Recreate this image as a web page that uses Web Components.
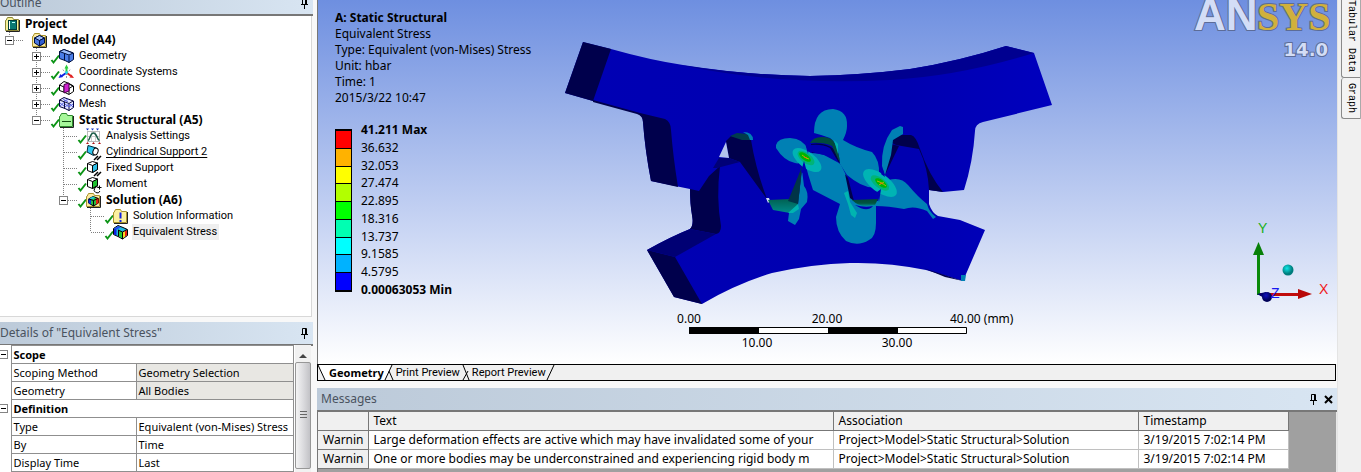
<!DOCTYPE html>
<html lang="en">
<head>
<meta charset="utf-8">
<title>Static Structural - Mechanical</title>
<style>
html, body { margin: 0; height: 100%; overflow: hidden; background: #f0f0f0; }
body { font: 12px/16px "Noto Sans", "Open Sans", sans-serif; color: #000; }
</style>
</head>
<body>
<mech-app></mech-app>
<script>
const define = (name, html, ready) => {
  const tpl = document.createElement('template');
  tpl.innerHTML = html;
  customElements.define(name, class extends HTMLElement {
    connectedCallback() {
      if (this.shadowRoot) return;
      this.attachShadow({ mode: 'open' }).append(tpl.content.cloneNode(true));
      if (ready) ready(this, this.shadowRoot);
    }
  });
};

const folder = (fill, edge) => `<path d="M6 4.500 L7.500 1.500 H12.500 L13.500 3.500 H18.500 V14.500 H5.500 V4.500Z" fill="${fill}" stroke="${edge}"/><path d="M6 15.500H19.500V4" fill="none" stroke="#222"/>`;
const smallCube = (a, b, c) => `<path d="M7.500 6 L12.500 3.500 L17.500 6 V11 L12.500 14 L7.500 11Z" fill="${a}" stroke="#001040"/><path d="M7.500 6 L12.500 8.500 L17.500 6 L12.500 3.500Z" fill="${b}" stroke="#001040"/><path d="M12.500 8.500 L17.500 6 V11 L12.500 14Z" fill="${c}" stroke="#001040"/>`;
const hatch = '<path d="M13 16l4-4M16 16l4-4" stroke="#000" stroke-width="1.500"/>';
const wireBox = (front, f2) => `<path d="M6.500 3.500 L11.500 1.500 L16.500 3 V9.500 L11.500 12.500 L6.500 10.500Z" fill="#fff" stroke="#000"/><path d="M11.500 5.500 L16.500 3 V9.500 L11.500 12.500Z" fill="${front}" stroke="#000"/><path d="M6.500 3.500 L11.500 5.500 L16.500 3" fill="${f2}" stroke="#000"/>`;
const ICONS = {
  project: folder('#f6f19a', '#8c8636') + '<rect x="8.500" y="4.500" width="8" height="9" fill="#0a7a72" stroke="#003c3c"/><path d="M9.500 5v8" stroke="#fff"/><path d="M12 6.500h3" stroke="#bff"/>',
  model: folder('#fbe9a0', '#a8922c') + smallCube('#4b78e0', '#9dbcf8', '#2f5cd0'),
  geometry: '<path d="M5.500 3.500 L10 1.500 L14 3 L19.500 5 V11.500 L15 14.500 L11 12.500 L5.500 10.500Z" fill="#4a7de8" stroke="#001040"/><path d="M5.500 3.500 L10 1.500 L19 5 L15 7 Z" fill="#9dc0ff" stroke="#001040"/><path d="M10.500 5.500V12.500M15 7.500V14.500" stroke="#001040"/>',
  coords: '<path d="M12.500 8.500V3" stroke="#2ecc40" stroke-width="2"/><path d="M12.500 0.500l2 4h-4z" fill="#2ecc40"/><path d="M12 9L7 12.500" stroke="#1020e0" stroke-width="2"/><path d="M4.500 14l2-4 2.500 3z" fill="#1020e0"/><path d="M13 9L17 12" stroke="#e02020" stroke-width="2"/><path d="M20 14l-4.500-.5 2-3z" fill="#e02020"/><path d="M12.500 9L8 5M12.500 9L17 5M12.500 9V15" stroke="#999" stroke-dasharray="2 1"/><circle cx="12.500" cy="8.500" r="1.500" fill="#20d8e8"/>',
  connections: '<path d="M5.500 5 L10 1.500 L14 3 L19.500 6 V11.500 L15 14.500 L11 12.500 L5.500 10.500Z" fill="#fff" stroke="#000"/><path d="M5.500 5 L10 7 L14 3.500 L19 6 L15 8.500V14M10 7V12" stroke="#000" fill="none"/><path d="M10 4.500 L15 3 V11 L10 13Z" fill="#d020d0" stroke="#400040"/>',
  mesh: '<path d="M5.500 4 L10 1.500 L14 3 L19.500 5 V11.500 L15 14.500 L11 12.500 L5.500 10.500Z" fill="#e4e8ff" stroke="#000040"/><path d="M5.500 4L15 7.500L19 5M10.500 5.500V12.500M15 7.500V14.500" fill="none" stroke="#101040"/><path d="M6 7L10 10M6 10L10 6.500M11 8L15 11M11 11L15 8M15 11L19 8M16 8L19 11M9 3L14 6M14 3.500L10 5" stroke="#5560e0"/>',
  folderGreen: folder('#a6f79a', '#2c8a2c') + '<path d="M8 9.500h9" stroke="#145014"/>',
  settings: '<rect x="6.500" y="3.500" width="12" height="10" fill="#fff" stroke="#bbb"/><path d="M10.500 4v9M14.500 4v9M7 8.500h11" stroke="#ccc"/><path d="M7 12.500C9 12 9 5 12.500 5S16 12 18.500 12.500" fill="none" stroke="#1c5c48" stroke-width="1.500"/><path d="M5 .5h3l-1.500 2zM10 .5h3l-1.500 2zM15 .5h3l-1.500 2z" fill="#1838c8"/><path d="M5 16h3l-1.500-2zM11 16h3l-1.500-2zM17 16h3l-1.500-2z" fill="#b01818"/>',
  cylinder: '<path d="M7 1.500L15.500 4 16.500 8.500 12.500 11.500 6 8Z" fill="#30c8f0" stroke="#002838"/><ellipse cx="14.500" cy="7.500" rx="2.500" ry="3.500" transform="rotate(20 14.500 7.500)" fill="#fff" stroke="#000"/>' + hatch,
  fixed: wireBox('#30c0e8', '#fff') + hatch,
  moment: wireBox('#20c030', '#fff') + '<path d="M18 11.500A3 3 0 1 0 19 15" fill="#fff" stroke="#000"/><path d="M16.500 11.500h4M18.500 9.500v4" stroke="#000"/>',
  solution: folder('#fbe9a0', '#a8922c') + '<path d="M7.500 7L12 4.500 17.500 6.500V11L12.500 14 7.500 11Z" fill="#28c040" stroke="#000"/><path d="M7.500 7L10 6V12.500L7.500 11Z" fill="#1030e0"/><path d="M8 6.500L12 4.500 14 5.500 11 7.500Z" fill="#20c8d8"/><path d="M15 6L17.500 6.500V11L15 12.500Z" fill="#e82010"/><path d="M12.500 8.500V14M12.500 8.500L17 6.500M12.500 8.500L8 7" stroke="#000"/>',
  info: folder('#fbf0a0', '#a8922c') + '<path d="M12.500 4.500v6M12.500 12v2" stroke="#1020e0" stroke-width="2"/>',
  stress: '<path d="M5.500 4.500L10 1.500L15 3.500L19.500 5.500V11.500L14.500 15L10 12.500L5.500 10.500Z" fill="#20b8e0" stroke="#000"/><path d="M6 4.500L8.500 5.500V11.500L6 10.500Z" fill="#1020e0"/><path d="M6 4.500L10 2 13 3 9 5.500Z" fill="#2050f0"/><path d="M11 6.500L14 7.500V14L11 12.500Z" fill="#20c830"/><path d="M15 8L17 7V13L15 14Z" fill="#f8d820"/><path d="M17 7L19 6V11.500L17 12.500Z" fill="#e82010"/><path d="M10.500 6V12.500M14.500 8V15M14.500 8L19 5.500M14.500 8L10 6" stroke="#000"/>'
};
const CHECK = '<path d="M-2.500 12L-0.500 14.500L5 7.500" fill="none" stroke="#0c9416" stroke-width="2"/>';
const PIN = '<svg width="9" height="11" viewBox="0 0 9 11" aria-hidden="true"><path d="M2.500 0.500H6.500V6.500M2.500 0.500V6.500M1 6.500H8M5.500 1V6M4.500 7V11" fill="none" stroke="#000"/></svg>';

define('tree-item', `<style>
:host { display: flex; height: 16px; align-items: stretch; font: 11px/16px Roboto, "Liberation Sans", sans-serif; white-space: nowrap; }
svg { display: block; overflow: visible; flex: none; }
.cell { position: relative; width: 27px; flex: none; }
button { position: absolute; left: 5px; top: 4px; width: 9px; height: 9px; padding: 0; border: 1px solid #848484; border-radius: 0; background: #fff; }
button svg { width: 7px; height: 7px; }
a { display: block; color: #000; text-decoration: none; padding: 0 1px; line-height: 16px; }
:host([bold]) a { font: 700 12px/16px "Noto Sans", sans-serif; }
:host([underline]) a { text-decoration: underline; text-underline-offset: 2px; }
:host([selected]) a { background: #efefef; padding-right: 2px; }
</style><a href="#"><slot></slot></a>`, (el, root) => {
  const label = root.querySelector('a');
  const guides = el.getAttribute('guides') || '';
  [...guides].forEach(g => {
    const cell = document.createElement('span');
    cell.className = 'cell';
    const down = g === '|' || g === 't' ? 'M9.500 0V16' : g === 'l' ? 'M9.500 0V8' : '';
    const across = g === 't' || g === 'l' ? 'M10 8.500H24' : '';
    cell.innerHTML = `<svg width="27" height="16" aria-hidden="true"><path d="${down}${across}" fill="none" stroke="#808080" stroke-dasharray="1 1"/></svg>`;
    label.before(cell);
  });
  const box = el.getAttribute('box');
  if (box) {
    const b = document.createElement('button');
    b.setAttribute('aria-label', box === '+' ? 'Expand' : 'Collapse');
    b.innerHTML = `<svg viewBox="0 0 7 7"><path d="M1 3.500H6${box === '+' ? 'M3.500 1V6' : ''}" stroke="#000"/></svg>`;
    root.querySelectorAll('.cell')[guides.length - 1].append(b);
  }
  const icon = document.createElement('span');
  icon.innerHTML = `<svg width="24" height="16" viewBox="0 0 24 16" aria-hidden="true">${el.hasAttribute('ok') ? CHECK : ''}${ICONS[el.getAttribute('icon')]}</svg>`;
  label.before(icon);
});

define('outline-tree', `<style>
:host { display: block; height: 300px; background: #fff; border-right: 1px solid #d8d8d8; border-bottom: 1px solid #d8d8d8; margin-right: 1px; }
</style>
<tree-item icon="project" bold>Project</tree-item>
<tree-item icon="model" guides="l" box="-" bold>Model (A4)</tree-item>
<tree-item icon="geometry" guides=" t" box="+" ok>Geometry</tree-item>
<tree-item icon="coords" guides=" t" box="+" ok>Coordinate Systems</tree-item>
<tree-item icon="connections" guides=" t" box="+" ok>Connections</tree-item>
<tree-item icon="mesh" guides=" t" box="+" ok>Mesh</tree-item>
<tree-item icon="folderGreen" guides=" l" box="-" ok bold>Static Structural (A5)</tree-item>
<tree-item icon="settings" guides="  t" ok>Analysis Settings</tree-item>
<tree-item icon="cylinder" guides="  t" ok underline>Cylindrical Support 2</tree-item>
<tree-item icon="fixed" guides="  t" ok>Fixed Support</tree-item>
<tree-item icon="moment" guides="  t" ok>Moment</tree-item>
<tree-item icon="solution" guides="  l" box="-" ok bold>Solution (A6)</tree-item>
<tree-item icon="info" guides="   t" ok>Solution Information</tree-item>
<tree-item icon="stress" guides="   l" ok selected>Equivalent Stress</tree-item>`);

define('dock-panel', `<style>
:host { display: block; }
header { display: flex; align-items: center; gap: 6px; height: 22px; padding-right: 4px; background: linear-gradient(90deg, #bccad9, #d8e5f2); border-bottom: 2px solid #777; color: #4a5360; }
h2 { flex: 1; margin: 0; font-size: 12px; font-weight: 400; line-height: 22px; padding-left: var(--title-pad, 0px); }
button { display: flex; padding: 0; border: 0; background: none; }
button.close { display: none; }
:host([closable]) .close { display: flex; }
</style>
<header><h2></h2><button aria-label="Pin">${PIN}</button><button class="close" aria-label="Close"><svg width="9" height="9" viewBox="0 0 9 9"><path d="M1 1L8 8M8 1L1 8" stroke="#000" stroke-width="2"/></svg></button></header>
<slot></slot>`, (el, root) => { root.querySelector('h2').textContent = el.getAttribute('heading'); });

define('details-grid', `<style>
:host { display: flex; background: #fff; margin: -1px 2px 0 0; }
table { flex: 1; min-width: 0; table-layout: fixed; border-collapse: collapse; font-size: 11px; line-height: 17px; }
col.gutter { width: 11px; } col.name { width: 125px; }
th, td { height: 17px; padding: 0 0 0 2px; text-align: left; font-weight: 400; white-space: nowrap; overflow: hidden; border: 1px solid #8f8f8f; }
.gutter { border-left: 0; border-top: 0; border-bottom: 0; padding: 0; background: #fff; }
.group { font-weight: 700; }
.off { background: #e8e7e3; }
.gutter button { display: block; width: 8px; height: 9px; padding: 0; border: 1px solid #848484; border-left: 0; background: #fff; }
.gutter svg { display: block; }
.scroll { flex: none; width: 16px; margin-left: 1px; display: flex; flex-direction: column; background: #f1f1f1; }
.scroll button { height: 17px; padding: 0; border: 0; background: none; }
.thumb { display: flex; align-items: center; justify-content: center; height: 105px; border: 1px solid #979797; border-radius: 2px; background: linear-gradient(90deg, #f4f4f4, #dcdcdf 50%, #c2c2c6); }
</style>
<table><colgroup><col class="gutter"><col class="name"><col></colgroup><tbody></tbody></table>
<div class="scroll"><button aria-label="Scroll up"><svg width="8" height="4" viewBox="0 0 8 4"><path d="M0 4L4 0L8 4Z" fill="#444"/></svg></button><div class="thumb"><svg width="7" height="9" viewBox="0 0 7 9"><path d="M0 .5H7M0 3.500H7M0 6.500H7" stroke="#666"/></svg></div></div>`, (el, root) => {
  const rows = [['Scope'], ['Scoping Method', 'Geometry Selection', 'off'], ['Geometry', 'All Bodies', 'off'], ['Definition'], ['Type', 'Equivalent (von-Mises) Stress', ''], ['By', 'Time', ''], ['Display Time', 'Last', '']];
  root.querySelector('tbody').innerHTML = rows.map(r => r.length === 1
    ? `<tr><td class="gutter"><button aria-label="Collapse ${r[0]}"><svg width="7" height="7" viewBox="0 0 7 7"><path d="M1 3.500H6" stroke="#000"/></svg></button></td><th class="group" colspan="2">${r[0]}</th></tr>`
    : `<tr><td class="gutter"></td><th scope="row">${r[0]}</th><td class="${r[2]}">${r[1]}</td></tr>`).join('');
});

define('color-legend', `<style>
:host { display: flex; gap: 9px; }
.bar { display: flex; flex-direction: column; width: 15px; height: 159px; margin-top: 7px; border: 1px solid #000; border-width: 2px 1px; align-self: flex-start; }
.bar i { flex: 1; border-top: 1px solid #000; }
.bar i:first-child { border-top: 0; }
ol { list-style: none; margin: 0; padding: 0; display: flex; flex-direction: column; justify-content: space-between; height: 176px; }
li { line-height: 16px; }
li:first-child, li:last-child { font-weight: 700; }
</style><div class="bar"></div><ol></ol>`, (el, root) => {
  root.querySelector('.bar').innerHTML = ['#f00', '#ffb200', '#ff0', '#b2ff00', '#0f0', '#00ffb2', '#0ff', '#00b2ff', '#00f'].map(c => `<i style="background:${c}"></i>`).join('');
  root.querySelector('ol').innerHTML = ['41.211 Max', '36.632', '32.053', '27.474', '22.895', '18.316', '13.737', '9.1585', '4.5795', '0.00063053 Min'].map(t => `<li>${t}</li>`).join('');
});

define('gear-scene', `<style>
:host { display: block; }
svg { display: block; width: 100%; height: 100%; }
text { font: 12px "Noto Sans", "Open Sans", sans-serif; }
</style>
<svg viewBox="318 0 1019 364" role="img" aria-label="Equivalent stress on gear teeth">
<defs>
<linearGradient id="face" x1="0" y1="0" x2="1" y2="0"><stop offset="0" stop-color="#0000b4"/><stop offset=".7" stop-color="#0000b0"/><stop offset="1" stop-color="#0000be"/></linearGradient>
<linearGradient id="root" x1="0" y1="0" x2="0" y2="1"><stop offset="0" stop-color="#004836"/><stop offset=".6" stop-color="#005440"/><stop offset="1" stop-color="#008a8a"/></linearGradient>
</defs>
<path fill="url(#face)" d="M583 42L611 49Q650 60 683 65Q745 75 810 76Q862 75 910 69Q960 61 1006 46L1034 53L1052 105L983 122Q975 124 975 131Q973 162 964 190L943 192L929 190L929 204Q932 213 938 216L960 220L985 230L963 281L926 270Q888 262 850 263Q812 264 772 273Q736 284 702 304L674 297L647 250Q670 237 690 229Q694 225 692 215Q690 204 690 189L651 181Q645 150 643 122Q643 116 637 113L593 101L565 93Z"/>
<path fill="#000090" d="M680 65Q745 75 810 76Q862 75 910 69Q960 61 1006 46L1034 53Q960 76 890 80Q780 86 680 65Z"/>
<g fill="#00004c">
<path d="M583 42L611 49L593 101L565 93Z"/>
<path d="M593 100L640 113L665 119Q671 122 671 130Q673 156 678 187L651 181Q645 150 643 122Q643 116 637 114L593 102Z"/>
<path d="M690 189L699 191L709 176L720 166Q716 198 721 226Q721 233 716 234L690 229Q694 225 692 215Q690 204 690 189Z"/>
<path d="M647 250L675 257L702 304L674 297Z"/>
<path d="M726 141L731 136L751 140Q756 170 767 199L740 162L729 158Z"/>
<path d="M893 139L899 135H911Q916 136 920 149Q929 175 943 192L929 190Q928 168 919 149L896 145L892 143Z"/>
<path d="M899 146L885 175L891 144Z"/>
<path d="M923 268L963 281L945 277Z"/>
</g>
<path fill="#000076" d="M719 158L729 158L740 162L717 168L713 168Z"/>
<path fill="#000074" d="M647 250Q670 237 690 229L716 234L675 257Z"/>
<path fill="#b4c4ed" d="M726 142L729 158L719 157Z"/><path fill="#d0dbf5" d="M766 198H769L770 201L768 203Z"/>
<path fill="#003c4c" d="M730 136L737 133L748 134L751 140L742 140Z"/>
<g fill="#0080b4">
<path d="M743 132Q753 132 753 140H750L748 135Z"/>
<path d="M776 145Q778 138 790 138Q804 139 807 149L805 157Q801 165 795 163Q784 161 776 148Z"/>
<path d="M802 170L804 186Q809 192 807 202L801 209L799 219L795 225L788 221L789 213L798 204Z"/>
<path d="M814 133Q814 109 833 109Q848 111 847 126Q847 132 843 140Q856 148 872 152Q880 160 879 175L881 186Q867 192 847 175L840 164Q838 144 830 138Q822 135 814 133Z"/>
<path d="M804 158L809 153Q830 153 841 165L847 177L853 200L878 201L881 188L881 183Q899 174 908 185Q918 197 927 204Q929 212 936 217L933 219L927 211Q914 205 904 209Q888 206 876 206L876 223Q876 237 869 240Q858 247 846 241Q836 232 836 217L840 204L813 190L808 174Z"/>
<path d="M900 126L903 127L903 134L893 140L891 155L885 175L882 166Q881 145 892 130Z"/>
<path d="M961 275H966L965 281H961Z"/>
</g>
<path fill="#00004c" d="M845 174L848 178L854 201L850 198ZM811 144Q824 142 834 149L840 163L824 153L812 153Z"/>
<path fill="#0000ae" d="M811 145Q822 144 830 148L839 163L824 155L811 152Z"/>
<path fill="url(#root)" d="M768 200L790 199L802 167L798 204Q795 212 790 213L773 210Z"/>
<path fill="#003448" d="M802 167L788 201L798 204Z"/>
<path fill="#004a3c" d="M810 143Q813 137 822 137Q831 137 834 142Q839 152 840 163L832 146Q823 142 810 143Z"/>
<path fill="url(#root)" d="M852 200L878 199L875 205L866 206Q858 206 852 200Z"/>
<path d="M855 205Q865 208 873 206Q867 213 855 205Z" fill="#0000b0"/>
<path fill="#00b4b0" d="M844 193L848 191L850 202L857 213L855 218L851 215L848 204ZM798 204L799 209L793 213L788 213ZM834 140L838 144L838 154Z"/>
<g fill="#00b4b4"><ellipse cx="807" cy="160" rx="17" ry="8" transform="rotate(37 807 160)"/><ellipse cx="880" cy="183" rx="20" ry="9" transform="rotate(37 880 183)"/></g>
<g fill="#00b478"><ellipse cx="806" cy="158" rx="10" ry="5" transform="rotate(37 806 158)"/><ellipse cx="880" cy="183" rx="11" ry="5" transform="rotate(37 880 183)"/></g>
<g fill="#00b400"><ellipse cx="805" cy="157" rx="7" ry="3" transform="rotate(37 805 157)"/><ellipse cx="881" cy="183" rx="7" ry="3" transform="rotate(37 881 183)"/></g>
<path d="M802 155L806 158L809 159M877 181L882 183L886 186M884 182L879 185" fill="none" stroke="#b4b400" stroke-width="1"/><path d="M804 157L807 158M880 183L883 184" stroke="#e07010"/>
<path fill="#0000b0" d="M806 146L809 147L808 154ZM804 161L801 172L808 176ZM883 170L885 177L881 174ZM877 192L881 189L879 202Z"/>
<g stroke="#000"><path d="M689.500 327.500H966.500V333.500H689.500Z" fill="#fff"/><path d="M689.500 327.500H758.500V333.500H689.500ZM828.500 327.500H897.500V333.500H828.500Z" fill="#000"/></g>
<g text-anchor="middle"><text x="689" y="323">0.00</text><text x="827" y="323">20.00</text><text x="757" y="347">10.00</text><text x="897" y="347">30.00</text></g><text x="950" y="323">40.00 (mm)</text>
</svg>`);

define('axis-triad', `<style>:host { display: block; } svg { display: block; } text { font: 14px "Liberation Sans", sans-serif; }</style>
<svg width="84" height="86" viewBox="1250 220 84 86" role="img" aria-label="Axis triad">
<defs><radialGradient id="c" cx=".4" cy=".35"><stop offset="0" stop-color="#10e8e8"/><stop offset="1" stop-color="#007c7c"/></radialGradient><radialGradient id="b" cx=".4" cy=".35"><stop offset="0" stop-color="#1010c0"/><stop offset="1" stop-color="#000058"/></radialGradient></defs>
<path d="M1257 253H1260V295H1257Z" fill="#0a8a0a"/><path d="M1258.500 242L1264 255H1253Z" fill="#088008"/>
<path d="M1260 293H1299V296H1260Z" fill="#c00c0c"/><path d="M1298 289L1312 294L1298 299Z" fill="#b80808"/>
<path d="M1257 294L1266 292V299Z" fill="#000070"/><circle cx="1267" cy="297" r="5" fill="url(#b)"/><circle cx="1288" cy="270" r="5.500" fill="url(#c)"/>
<text x="1258" y="233" fill="#18b018">Y</text><text x="1319" y="294" fill="#f01818">X</text><text x="1271" y="298" fill="#1818f0">Z</text>
</svg>`);

define('ansys-logo', `<style>:host { display: block; } svg { display: block; } text { paint-order: stroke; stroke: #5c6c98; stroke-width: 2px; }
.a { font: 700 44px "Liberation Sans", sans-serif; fill: #d3ddf6; } .s { font: 700 40px "Liberation Serif", serif; fill: #d0b03c; } .v { font: 700 18px "DejaVu Sans", sans-serif; fill: #d3ddf6; }</style>
<svg width="142" height="60" viewBox="1192 0 142 60" role="img" aria-label="ANSYS 14.0"><text class="a" x="1195" y="30">AN</text><text class="s" x="1258" y="30">SYS</text><text class="v" x="1329" y="56" text-anchor="end">14.0</text></svg>`);

define('result-view', `<style>
:host { display: block; position: relative; height: 364px; background: linear-gradient(#6e8fe0, #fff); border-left: 1px solid #777; overflow: hidden; box-sizing: border-box; }
gear-scene { position: absolute; inset: 0; }
ansys-logo { position: absolute; right: 4px; top: 0; }
axis-triad { position: absolute; right: 3px; top: 220px; }
.info { position: relative; padding: 10px 0 0 17px; }
h1, p { margin: 0; font-size: 12px; line-height: 16px; }
color-legend { position: relative; padding: 16px 0 0 17px; }
</style>
<gear-scene></gear-scene><ansys-logo></ansys-logo><axis-triad></axis-triad>
<div class="info"><h1>A: Static Structural</h1><p>Equivalent Stress</p><p>Type: Equivalent (von-Mises) Stress</p><p>Unit: hbar</p><p>Time: 1</p><p>2015/3/22 10:47</p></div>
<color-legend></color-legend>`);

define('view-tabs', `<style>
:host { display: flex; height: 15px; border: 1px solid #000; background: #f0f0f0; margin-right: 1px; font: 11px/15px Roboto, sans-serif; }
button { display: flex; align-items: center; padding: 0; border: 0; background: none; font: inherit; line-height: 15px; color: #000; }
button.on { font: 700 11px/15px "Noto Sans", sans-serif; background: #fff; }
svg { display: block; flex: none; }
</style>
<button class="on"><svg width="11" height="15" viewBox="0 0 11 15"><path d="M0 0L7 15H0Z" fill="#f0f0f0"/><path d="M0 0L7 15" stroke="#000"/></svg>Geometry</button>
<button><svg width="12" height="15" viewBox="0 0 12 15"><path d="M0 0H8L0 15Z" fill="#fff"/><path d="M8 0L1 15M5 6L9 15" fill="none" stroke="#000"/></svg>Print Preview</button>
<button><svg width="12" height="15" viewBox="0 0 12 15"><path d="M8 6L3 15M3 0L9 15" fill="none" stroke="#000"/></svg>Report Preview<svg width="9" height="15" viewBox="0 0 9 15"><path d="M8 0L1 15" stroke="#000"/></svg></button>`);

define('message-list', `<style>
:host { display: block; flex: 1; background: #a0a0a0; border-left: 1px solid #777; border-right: 1px solid #e8e8e8; }
table { table-layout: fixed; width: 971px; border-collapse: collapse; font-size: 12px; line-height: 18px; }
th, td { height: 18px; padding: 0 0 0 5px; text-align: left; font-weight: 400; white-space: nowrap; overflow: hidden; border-right: 1px solid #c0c0c0; border-bottom: 1px solid #c0c0c0; background: #fff; }
thead th { background: #f0f0f0; border-color: #777; }
tbody th { background: #f0f0f0; border-color: #777; }
</style>
<table><colgroup><col style="width:50px"><col style="width:465px"><col style="width:305px"><col></colgroup>
<thead><tr><th></th><th>Text</th><th>Association</th><th>Timestamp</th></tr></thead>
<tbody><tr><th>Warnin</th><td>Large deformation effects are active which may have invalidated some of your</td><td>Project&gt;Model&gt;Static Structural&gt;Solution</td><td>3/19/2015 7:02:14 PM</td></tr>
<tr><th>Warnin</th><td>One or more bodies may be underconstrained and experiencing rigid body m</td><td>Project&gt;Model&gt;Static Structural&gt;Solution</td><td>3/19/2015 7:02:14 PM</td></tr></tbody></table>`);

define('side-tabs', `<style>
:host { display: flex; flex-direction: column; width: 23px; flex: none; background: #f0f0f0; font: 10px/16px "Liberation Mono", monospace; align-items: flex-end; }
button { writing-mode: vertical-rl; width: 20px; padding: 5px 0; border: 1px solid #8a8a8a; border-right-color: #aaa; border-radius: 3px 0 0 3px; background: #f3f3f3; font: inherit; color: #000; text-align: left; }
button:first-of-type { border-top: 0; padding-top: 0; border-top-left-radius: 0; }
button + button { border-top: 0; }
</style><button>Tabular Data</button><button>Graph</button>`);

define('mech-app', `<style>
:host { display: flex; min-height: 100vh; background: #f8f8f8; }
aside { width: 313px; flex: none; }
aside dock-panel:first-child { margin-top: -8px; }
aside dock-panel + dock-panel { margin-top: 5px; }
main { flex: 1; min-width: 0; margin-left: 4px; display: flex; flex-direction: column; border-right: 1px solid #e4e4e4; }
main dock-panel { margin-top: 7px; flex: 1; display: flex; flex-direction: column; --title-pad: 4px; }
</style>
<aside><dock-panel heading="Outline"><outline-tree></outline-tree></dock-panel><dock-panel heading='Details of "Equivalent Stress"'><details-grid></details-grid></dock-panel></aside>
<main><result-view></result-view><view-tabs></view-tabs><dock-panel heading="Messages" closable><message-list></message-list></dock-panel></main>
<side-tabs></side-tabs>`);
</script>
</body>
</html>
